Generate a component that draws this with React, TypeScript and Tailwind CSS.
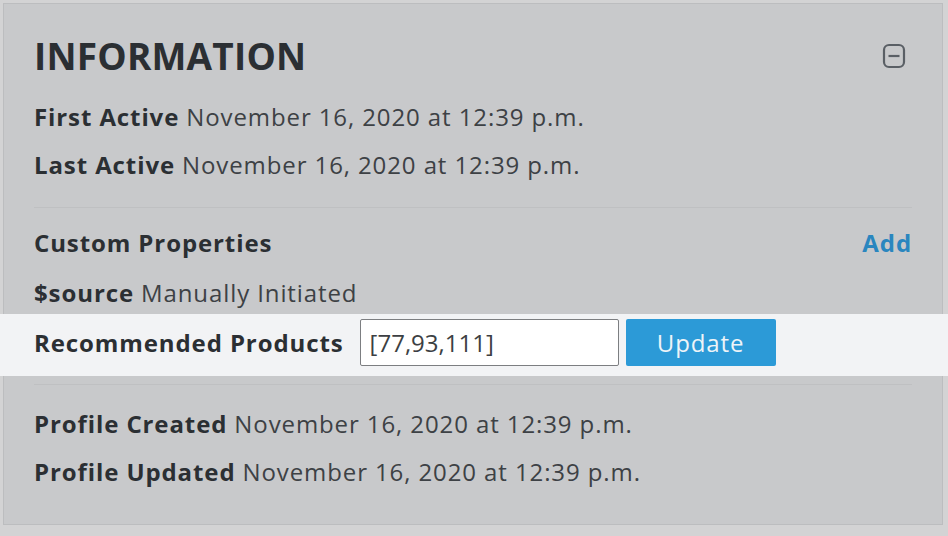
export default function App() {
  const font = { fontFamily: '"Open Sans", Lato, sans-serif' }
  return (
    <div className="w-[948px] h-[536px] bg-[#d3d3d4] pt-[3px] pl-[3px] overflow-hidden" style={font}>
      <div className="w-[940px] h-[522px] bg-[#c8c9cb] border border-[#bcbdbf] px-[30px] text-[24px] tracking-[0.9px] text-[#3d4145]">
        <div className="mt-[32px] h-[40px] flex items-center justify-between">
          <h1 className="text-[37px] font-bold leading-[40px] tracking-[0.2px] text-[#2b2f33]">INFORMATION</h1>
          <svg width="24" height="26" viewBox="0 0 24 26" className="mr-[6px] -mt-[1px]">
            <rect x="2" y="2" width="20" height="22" rx="5" fill="none" stroke="#5a5f65" strokeWidth="2.2" />
            <line x1="6.5" y1="13" x2="17.5" y2="13" stroke="#5a5f65" strokeWidth="2.2" />
          </svg>
        </div>
        <div className="mt-[17px] h-[48px] flex items-center">
          <span className="font-bold text-[#2b2f33]">First Active</span>
          <span className="ml-[7px]">November 16, 2020 at 12:39 p.m.</span>
        </div>
        <div className="h-[48px] flex items-center">
          <span className="font-bold text-[#2b2f33]">Last Active</span>
          <span className="ml-[7px]">November 16, 2020 at 12:39 p.m.</span>
        </div>
        <div className="mt-[18px] h-px bg-[#bfc0c2]" />
        <div className="mt-[11px] h-[48px] flex items-center justify-between">
          <span className="font-bold text-[#2b2f33]">Custom Properties</span>
          <button className="font-bold text-[#2a86bf]">Add</button>
        </div>
        <div className="mt-[5px] h-[42px] flex items-center">
          <span className="font-bold text-[#2b2f33]">$source</span>
          <span className="ml-[7px]">Manually Initiated</span>
        </div>
        <div className="-ml-[34px] -mr-[38px] h-[62px] bg-[#f2f3f5] pl-[34px] pt-[5px] flex items-start">
          <div className="h-[47px] flex items-center">
            <span className="font-bold text-[#2b2f33]">Recommended Products</span>
          </div>
          <input
            readOnly
            value="[77,93,111]"
            className="ml-[16px] w-[259px] h-[47px] bg-white border border-[#7c7e81] rounded-[2px] px-[9px] text-[24px] tracking-normal text-[#3c3f43] outline-none"
            style={font}
          />
          <button className="ml-[7px] w-[150px] h-[47px] bg-[#2c9ad7] rounded-[2px] text-[24px] text-[#eef4f8]" style={font}>
            Update
          </button>
        </div>
        <div className="mt-[8px] h-px bg-[#bfc0c2]" />
        <div className="mt-[15px] h-[48px] flex items-center">
          <span className="font-bold text-[#2b2f33]">Profile Created</span>
          <span className="ml-[7px]">November 16, 2020 at 12:39 p.m.</span>
        </div>
        <div className="h-[48px] flex items-center">
          <span className="font-bold text-[#2b2f33]">Profile Updated</span>
          <span className="ml-[7px]">November 16, 2020 at 12:39 p.m.</span>
        </div>
      </div>
    </div>
  )
}
